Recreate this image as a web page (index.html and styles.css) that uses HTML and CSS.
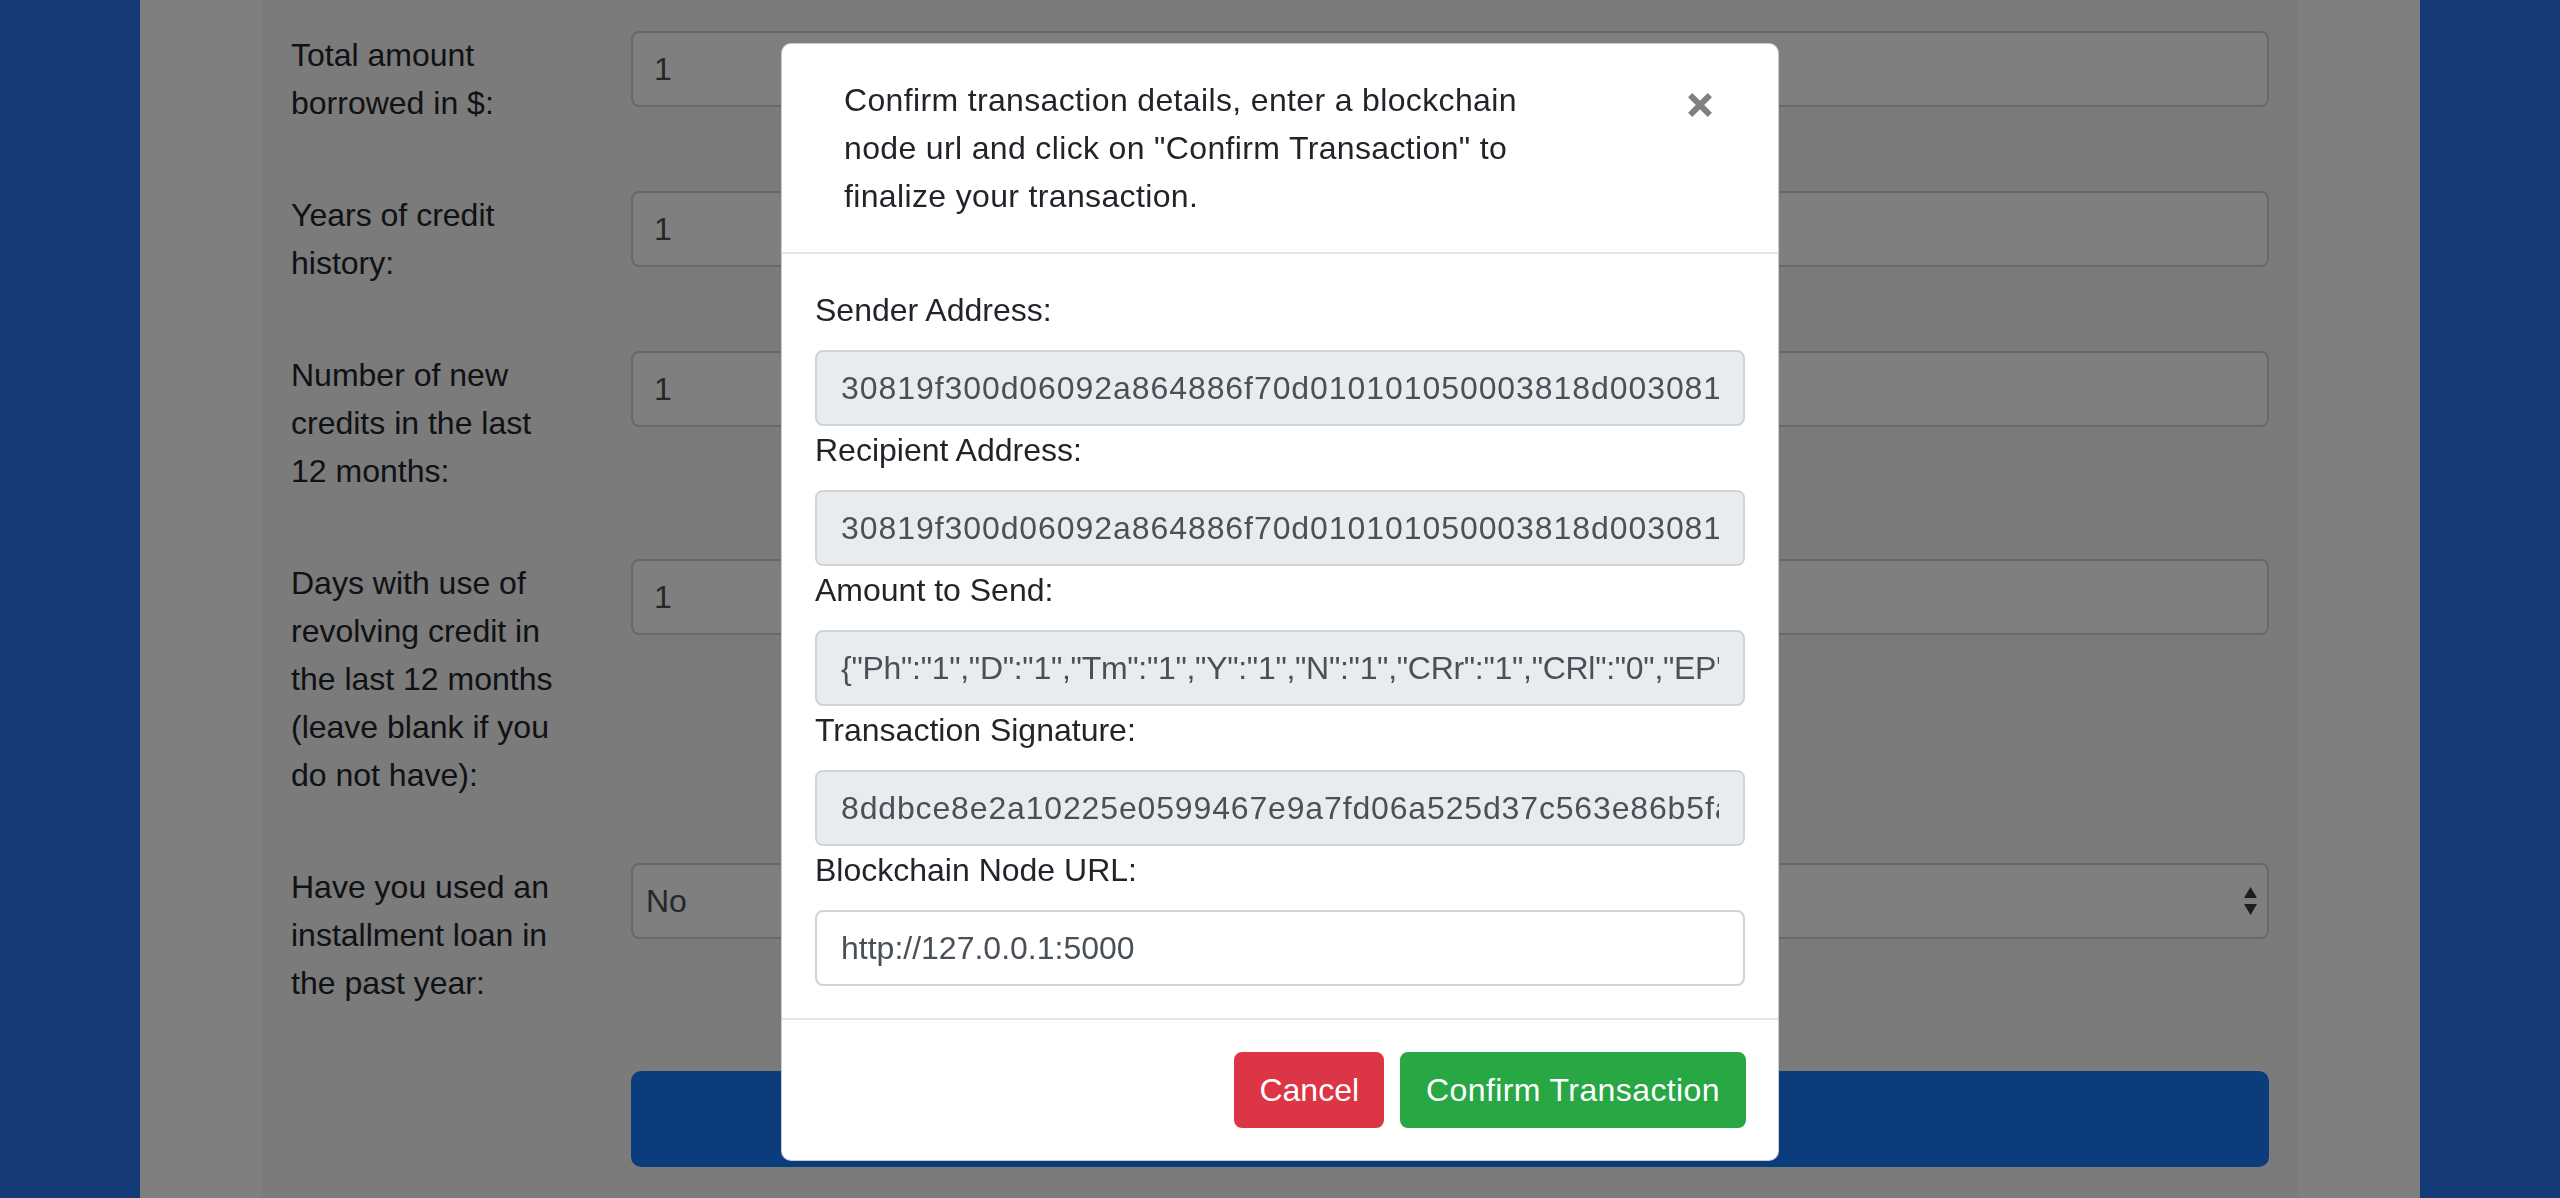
FILE: index.html
```html
<!DOCTYPE html>
<html lang="en">
<head>
<meta charset="utf-8">
<title>Confirm transaction</title>
<link rel="stylesheet" href="styles.css">
</head>
<body>
<div class="page">
  <div class="sheet">
    <form class="loan-form">
      <div class="form-row">
        <label class="col-label">Total amount borrowed in $:</label>
        <div class="col-field"><input class="field" type="text" value="1"></div>
      </div>
      <div class="form-row">
        <label class="col-label">Years of credit history:</label>
        <div class="col-field"><input class="field" type="text" value="1"></div>
      </div>
      <div class="form-row">
        <label class="col-label">Number of new credits in the last 12 months:</label>
        <div class="col-field"><input class="field" type="text" value="1"></div>
      </div>
      <div class="form-row">
        <label class="col-label">Days with use of revolving credit in the last 12 months (leave blank if you do not have):</label>
        <div class="col-field"><input class="field" type="text" value="1"></div>
      </div>
      <div class="form-row">
        <label class="col-label">Have you used an installment loan in the past year:</label>
        <div class="col-field">
          <div class="select-field">
            <span>No</span>
            <svg class="select-arrows" width="13" height="28" viewBox="0 0 13 28"><path d="M6.5 0 L13 11 L0 11 Z M0 17 L13 17 L6.5 28 Z"/></svg>
          </div>
        </div>
      </div>
      <div class="form-row">
        <div class="col-label"></div>
        <div class="col-field"><button class="btn-submit" type="button" aria-label="Submit"></button></div>
      </div>
    </form>
  </div>
</div>

<div class="backdrop"></div>

<div class="modal">
  <div class="modal-dialog">
    <div class="modal-header">
      <h5 class="modal-title">Confirm transaction details, enter a blockchain node url and click on "Confirm Transaction" to finalize your transaction.</h5>
      <button class="close" type="button" aria-label="Close">
        <svg width="24" height="24" viewBox="0 0 24 24"><path d="M2.2 2.2 L21.8 21.8 M21.8 2.2 L2.2 21.8"/></svg>
      </button>
    </div>
    <div class="modal-body">
      <label class="m-label">Sender Address:</label>
      <input class="m-field hex" type="text" readonly value="30819f300d06092a864886f70d010101050003818d0030818902818100c4a1e7b3f02d9a6c">
      <label class="m-label">Recipient Address:</label>
      <input class="m-field hex" type="text" readonly value="30819f300d06092a864886f70d010101050003818d0030818902818100b7d29f0e51ac3364">
      <label class="m-label">Amount to Send:</label>
      <input class="m-field json" type="text" readonly value="{&quot;Ph&quot;:&quot;1&quot;,&quot;D&quot;:&quot;1&quot;,&quot;Tm&quot;:&quot;1&quot;,&quot;Y&quot;:&quot;1&quot;,&quot;N&quot;:&quot;1&quot;,&quot;CRr&quot;:&quot;1&quot;,&quot;CRl&quot;:&quot;0&quot;,&quot;EP&quot;:&quot;1&quot;}">
      <label class="m-label">Transaction Signature:</label>
      <input class="m-field hex sig" type="text" readonly value="8ddbce8e2a10225e0599467e9a7fd06a525d37c563e86b5fa3c19d04e7b2">
      <label class="m-label">Blockchain Node URL:</label>
      <input class="m-field url" type="text" value="http://127.0.0.1:5000">
    </div>
    <div class="modal-footer">
      <button class="btn btn-danger" type="button">Cancel</button>
      <button class="btn btn-success" type="button">Confirm Transaction</button>
    </div>
  </div>
</div>
</body>
</html>
```

FILE: styles.css
```css
html, body {
  margin: 0;
  padding: 0;
  height: 100%;
  overflow: hidden;
}

body {
  font-family: "Liberation Sans", Arial, Helvetica, sans-serif;
  font-size: 32px;
  line-height: 48px;
  color: #212529;
}

*, *::before, *::after {
  box-sizing: border-box;
}

/* ---------- background page ---------- */
.page {
  display: flex;
  height: 1198px;
  padding: 0 140px;
  background: #2a74f0;
}

.sheet {
  flex: 1;
  display: flex;
  padding: 0 121px;
  background: #ffffff;
}

.loan-form {
  flex: 1;
  padding-top: 31px;
  background: #f6f6f6;
}

.form-row {
  display: flex;
  align-items: flex-start;
  margin-bottom: 64px;
}

.col-label {
  flex: 0 0 340px;
  padding: 0 30px;
  color: #212529;
}

.col-field {
  flex: 1;
  padding: 0 30px;
}

.field {
  display: block;
  width: 100%;
  height: 76px;
  padding: 0 24px 0 21px;
  border: 2px solid #ced4da;
  border-radius: 8px;
  background: #ffffff;
  font-family: inherit;
  font-size: 32px;
  color: #495057;
  outline: none;
}

.select-field {
  display: flex;
  align-items: center;
  justify-content: space-between;
  height: 76px;
  padding: 0 10px 0 13px;
  border: 2px solid #ced4da;
  border-radius: 8px;
  background: #ffffff;
  color: #495057;
}

.select-arrows {
  fill: #3a3a3a;
}

.btn-submit {
  display: block;
  width: 100%;
  height: 96px;
  border: 2px solid #167bfa;
  border-radius: 10px;
  background: #167bfa;
}

/* ---------- backdrop + modal ---------- */
.backdrop {
  position: fixed;
  inset: 0;
  background: rgba(0, 0, 0, 0.5);
}

.modal {
  position: fixed;
  inset: 0;
  display: flex;
  justify-content: center;
  align-items: flex-start;
}

.modal-dialog {
  width: 998px;
  margin-top: 43px;
  background: #ffffff;
  border: 1px solid rgba(0, 0, 0, 0.2);
  border-radius: 10px;
  overflow: hidden;
}

.modal-header {
  display: flex;
  align-items: flex-start;
  padding: 32px 66px 32px 62px;
  border-bottom: 2px solid #e3e7eb;
}

.modal-title {
  margin: 0;
  max-width: 720px;
  font-size: 32px;
  line-height: 48px;
  font-weight: 400;
  letter-spacing: 0.35px;
  color: #212529;
}

.close {
  margin: 17px 0 0 auto;
  padding: 0;
  width: 24px;
  height: 24px;
  border: 0;
  background: none;
  line-height: 0;
}

.close svg path {
  stroke: #808080;
  stroke-width: 6;
  fill: none;
}

.modal-body {
  padding: 32px 33px;
}

.m-label {
  display: block;
  margin-bottom: 16px;
  color: #212529;
}

.m-field {
  display: block;
  width: 100%;
  height: 76px;
  padding: 0 24px;
  border: 2px solid #ced4da;
  border-radius: 8px;
  background: #e9ecef;
  font-family: inherit;
  font-size: 32px;
  color: #495057;
  outline: none;
}

.m-field.hex {
  letter-spacing: 0.93px;
}

.m-field.sig {
  letter-spacing: 0.85px;
}

.m-field.json {
  letter-spacing: -0.3px;
}

.m-field.url {
  background: #ffffff;
}

.modal-footer {
  display: flex;
  justify-content: flex-end;
  gap: 16px;
  padding: 32px;
  border-top: 2px solid #e3e7eb;
}

.btn {
  height: 76px;
  padding: 0 24px;
  border: 2px solid transparent;
  border-radius: 8px;
  font-family: inherit;
  font-size: 32px;
  line-height: 48px;
  color: #ffffff;
}

.btn-danger {
  padding: 0 23px;
  background: #dc3545;
  border-color: #dc3545;
}

.btn-success {
  letter-spacing: 0.4px;
  background: #28a745;
  border-color: #28a745;
}
```
